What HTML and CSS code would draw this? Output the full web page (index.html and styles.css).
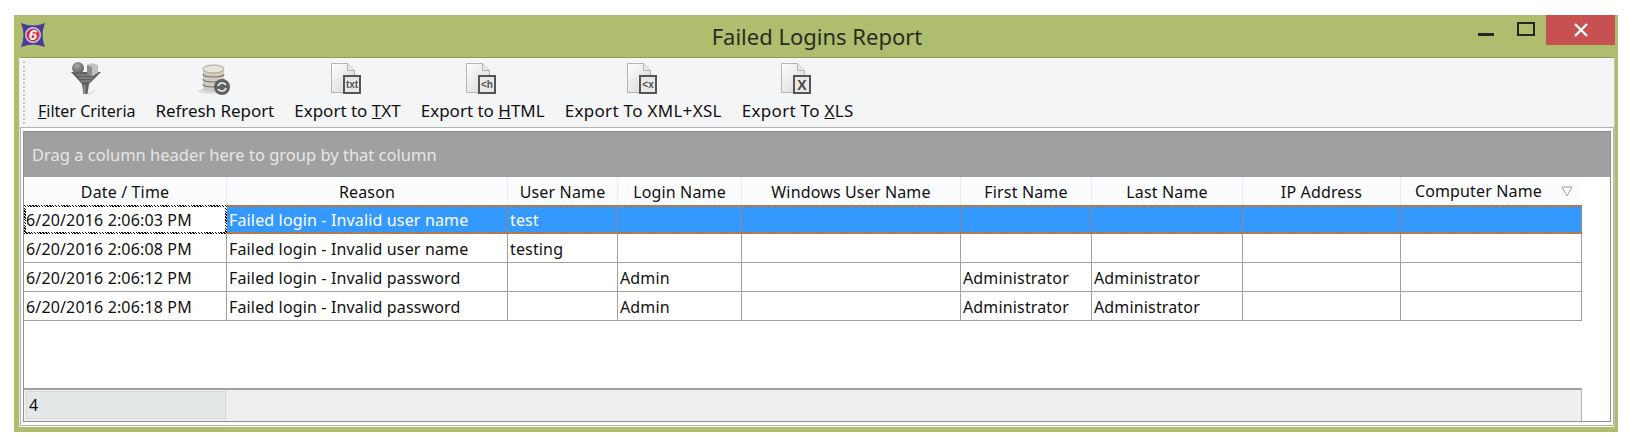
FILE: index.html
```html
<!DOCTYPE html>
<html lang="en">
<head>
    <meta charset="UTF-8">
    <meta name="viewport" content="width=device-width, initial-scale=1.0">
    <title>Failed Logins Report</title>
    <link rel="stylesheet" href="styles.css">
</head>
<body>
    <div class="window">
        <div class="titlebar">
            <svg class="app-logo" width="24" height="24" viewBox="0 0 24 24">
                <path d="M0 0 Q12 5 24 0 Q19 12 24 24 Q12 19 0 24 Q5 12 0 0Z" fill="#4b3a96"/>
                <circle cx="12" cy="12" r="8" fill="#a9d3ee"/>
                <circle cx="12" cy="12" r="6.5" fill="#e5283f"/>
                <text x="12" y="17" text-anchor="middle" class="logo-digit">6</text>
            </svg>
            <div class="title">Failed Logins Report</div>
            <div class="controls">
                <span class="btn-min"></span>
                <span class="btn-max"></span>
                <span class="btn-close">
                    <svg width="14" height="14" viewBox="0 0 14 14">
                        <path d="M1 1L13 13M13 1L1 13" stroke="#fff" stroke-width="2.4"/>
                    </svg>
                </span>
            </div>
        </div>

        <div class="content">
            <div class="toolbar">
                <div class="tool">
                    <svg class="filter-icon" width="32" height="34" viewBox="0 0 32 34">
                        <path d="M17 31L26 28L17 33Z" fill="#d5d6d8"/>
                        <path d="M0 10L30 10L18 22L16.5 32L12.5 32L11 22Z" fill="#5f5f5f"/>
                        <path d="M6 13L24 13M8 16L22 16M10 19L20 19" stroke="#9a9a9a"/>
                        <path d="M12.5 23L14.5 23L14.5 32L12.5 32Z" fill="#8f8f8f"/>
                        <circle cx="7" cy="6" r="6" fill="url(#ball)"/>
                        <path d="M16 3L21 1L27 3L27 11L21 14L16 11Z" fill="#c2c2c2"/>
                        <path d="M16 3L21 5L21 14L16 11Z" fill="#8d8d8d"/>
                    </svg>
                    <span class="tight"><u>F</u>ilter Criteria</span>
                </div>
                <div class="tool">
                    <svg class="db-icon" width="32" height="34" viewBox="0 0 32 34">
                        <ellipse cx="13" cy="29" rx="13" ry="3" fill="#dcdde0"/>
                        <path d="M5 7L5 27C5 31 26 31 26 27L26 7Z" fill="#d0ccc2"/>
                        <path d="M5 12C5 16 26 16 26 12M5 17C5 21 26 21 26 17M5 22C5 26 26 26 26 22" fill="none" stroke="#77736c" stroke-width="1.2"/>
                        <ellipse cx="15.5" cy="7" rx="10.5" ry="4" fill="#e7e4dc" stroke="#a9a59b"/>
                        <circle cx="24" cy="25" r="8" fill="#5f6062"/>
                        <path d="M20 24A4.5 4.5 0 0 1 28 23M28 26A4.5 4.5 0 0 1 20 27" fill="none" stroke="#eee" stroke-width="1.6"/>
                    </svg>
                    <span class="snug">Refresh Report</span>
                </div>
                <div class="tool">
                    <svg class="doc-icon" width="32" height="34" viewBox="0 0 32 34">
                        <use href="#doc"/>
                        <text x="22" y="26" text-anchor="middle" class="doc-label">txt</text>
                    </svg>
                    <span>Export to <u>T</u>XT</span>
                </div>
                <div class="tool">
                    <svg class="doc-icon" width="32" height="34" viewBox="0 0 32 34">
                        <use href="#doc"/>
                        <text x="22" y="26" text-anchor="middle" class="doc-label">&lt;h</text>
                    </svg>
                    <span>Export to <u>H</u>TML</span>
                </div>
                <div class="tool">
                    <svg class="doc-icon" width="32" height="34" viewBox="0 0 32 34">
                        <use href="#doc"/>
                        <text x="22" y="26" text-anchor="middle" class="doc-label">&lt;x</text>
                    </svg>
                    <span class="wide">Export To XML+XSL</span>
                </div>
                <div class="tool">
                    <svg class="doc-icon" width="32" height="34" viewBox="0 0 32 34">
                        <use href="#doc"/>
                        <text x="22" y="27.5" text-anchor="middle" class="doc-label doc-label-x">X</text>
                    </svg>
                    <span class="wide">Export To <u>X</u>LS</span>
                </div>
            </div>

            <div class="grid-frame">
                <div class="grid">
                    <div class="group-panel">Drag a column header here to group by that column</div>

                    <div class="row header">
                        <div>Date / Time</div>
                        <div>Reason</div>
                        <div>User Name</div>
                        <div>Login Name</div>
                        <div>Windows User Name</div>
                        <div>First Name</div>
                        <div>Last Name</div>
                        <div>IP Address</div>
                        <div class="sorted">
                            <span>Computer Name</span>
                            <svg class="sort-arrow" width="12" height="11" viewBox="0 0 12 11">
                                <path d="M1 1L11 1L6 10Z" fill="none" stroke="#a0a0a0"/>
                            </svg>
                        </div>
                    </div>

                    <div class="row selected">
                        <div class="focused">6/20/2016 2:06:03 PM</div>
                        <div>Failed login - Invalid user name</div>
                        <div>test</div>
                        <div></div>
                        <div></div>
                        <div></div>
                        <div></div>
                        <div></div>
                        <div></div>
                    </div>
                    <div class="row">
                        <div>6/20/2016 2:06:08 PM</div>
                        <div>Failed login - Invalid user name</div>
                        <div>testing</div>
                        <div></div>
                        <div></div>
                        <div></div>
                        <div></div>
                        <div></div>
                        <div></div>
                    </div>
                    <div class="row">
                        <div>6/20/2016 2:06:12 PM</div>
                        <div>Failed login - Invalid password</div>
                        <div></div>
                        <div>Admin</div>
                        <div></div>
                        <div>Administrator</div>
                        <div>Administrator</div>
                        <div></div>
                        <div></div>
                    </div>
                    <div class="row">
                        <div>6/20/2016 2:06:18 PM</div>
                        <div>Failed login - Invalid password</div>
                        <div></div>
                        <div>Admin</div>
                        <div></div>
                        <div>Administrator</div>
                        <div>Administrator</div>
                        <div></div>
                        <div></div>
                    </div>

                    <div class="spacer"></div>

                    <div class="summary">
                        <div class="count">4</div>
                    </div>
                </div>
            </div>
        </div>
    </div>

    <!-- shared shapes for the toolbar icons -->
    <svg class="defs" width="0" height="0">
        <defs>
            <linearGradient id="paper" x1="0" y1="0" x2="1" y2="1">
                <stop offset="0" stop-color="#ffffff"/>
                <stop offset="1" stop-color="#d4d4d4"/>
            </linearGradient>
            <radialGradient id="ball" cx="0.4" cy="0.3" r="0.8">
                <stop offset="0" stop-color="#a8a8a8"/>
                <stop offset="1" stop-color="#555"/>
            </radialGradient>
            <g id="doc">
                <path d="M1.5 1.5L17.5 1.5L24.5 8.5L24.5 30.5L1.5 30.5Z" fill="url(#paper)" stroke="#b4b4b4"/>
                <path d="M17.5 1.5L17.5 8.5L24.5 8.5" fill="#e8e8e8" stroke="#b4b4b4"/>
                <rect x="14" y="14" width="16" height="17" fill="#e8e8e8" stroke="#555" stroke-width="2"/>
            </g>
        </defs>
    </svg>
</body>
</html>
```

FILE: styles.css
```css
body {
    margin: 0;
    padding: 15px 18px 16px 14px;
    background-color: #fff;
    font-family: "Noto Sans", "Open Sans", sans-serif;
    font-size: 16px;
    letter-spacing: 0.15px;
    color: #111;
}

.window {
    height: 417px;
    box-sizing: border-box;
    display: flex;
    flex-direction: column;
    background-color: #afbd6e;
    padding: 0 3px 5px 5px;
}

.titlebar {
    height: 42px;
    flex: none;
    display: grid;
    grid-template-columns: 1fr auto 1fr;
}

.app-logo {
    margin: 8px 0 0 2px;
}

.logo-digit {
    font-family: "Liberation Sans", sans-serif;
    font-size: 15px;
    font-weight: bold;
    font-style: italic;
    fill: #fff;
}

.title {
    font-size: 22px;
    letter-spacing: 0;
    line-height: 43px;
    color: #2b2b20;
}

.controls {
    display: flex;
    justify-content: flex-end;
}

.btn-min {
    width: 16px;
    height: 3px;
    margin: 18px 23px 0 0;
    background-color: #262626;
}

.btn-max {
    width: 14px;
    height: 10px;
    margin: 7px 11px 0 0;
    border: 2px solid #262626;
}

.btn-close {
    width: 69px;
    height: 30px;
    display: flex;
    align-items: center;
    justify-content: center;
    background-color: #c75050;
}

.content {
    flex: 1;
    display: flex;
    flex-direction: column;
    background-color: #fff;
    border-top: 1px solid #8f9c5a;
    border-left: 1px solid #e8e8e8;
    border-right: 1px solid #c4c8b0;
}

.toolbar {
    height: 69px;
    flex: none;
    display: flex;
    padding-left: 8px;
    background-color: #f4f5f7;
    border-bottom: 1px solid #b4b4b4;
    position: relative;
}

.toolbar::before {
    content: "";
    position: absolute;
    left: 3px;
    top: 3px;
    bottom: 3px;
    border-left: 2px dotted #c4c4c4;
}

.tool {
    display: flex;
    flex-direction: column;
    align-items: center;
    padding: 4px 10px 0;
}

.tool svg {
    height: 34px;
    flex: none;
}

.tool .filter-icon {
    margin-left: 1px;
}

.tool .db-icon {
    margin-right: 2px;
}

.tool .doc-icon {
    margin-right: 3px;
}

.tool span {
    margin-top: 3px;
    font-size: 17px;
    letter-spacing: 0;
    line-height: 24px;
    white-space: nowrap;
}

.tool span.tight {
    font-size: 16px;
    letter-spacing: 0;
}

.tool span.snug {
    letter-spacing: -0.05px;
}

.tool span.wide {
    letter-spacing: 0.3px;
}

.defs {
    position: absolute;
}

.doc-label {
    font-family: "Liberation Sans", sans-serif;
    font-size: 10px;
    font-weight: bold;
    letter-spacing: 0;
    fill: #555;
}

.doc-label-x {
    font-size: 14px;
    fill: #444;
}

.grid-frame {
    flex: 1;
    display: flex;
    padding: 3px 2px;
    border: 1px solid #b4b4b4;
    border-top: none;
    margin-bottom: 1px;
}

.grid {
    flex: 1;
    display: flex;
    flex-direction: column;
    border: 1px solid #919191;
    border-top-color: #8a8a8a;
}

.group-panel {
    height: 45px;
    flex: none;
    padding-left: 8px;
    font-size: 16.5px;
    letter-spacing: 0;
    line-height: 46px;
    background-color: #a0a0a0;
    color: #e6e6e6;
}

.row {
    width: 1558px;
    height: 29px;
    flex: none;
    display: grid;
    grid-template-columns: 203px 281px 110px 124px 219px 131px 151px 158px 181px;
    grid-template-rows: minmax(0, 1fr);
    border-bottom: 1px solid #a0a0a0;
    box-sizing: border-box;
}

.row > div {
    padding-left: 2px;
    line-height: 31px;
    white-space: nowrap;
    border-right: 1px solid #a0a0a0;
}

.header {
    background-color: #fbfcfe;
    border-bottom: none;
}

.header > div {
    padding-left: 0;
    text-align: center;
    border-right: 1px solid #e3ecf8;
}

.header > div:last-child {
    border-right: none;
}

.header .sorted {
    display: flex;
    align-items: center;
    justify-content: flex-end;
    gap: 19px;
    padding-right: 9px;
}

.sort-arrow {
    flex: none;
}

/* dotted edge of the current row: orange dots over a grey line */
.selected {
    height: 29px;
    margin-top: -1px;
    background-color: #3399ff;
    color: #fff;
    border-top: 2px solid #8d8d8d;
    border-bottom: 2px solid #8d8d8d;
    border-image: repeating-linear-gradient(90deg, #c8702a 0 2px, #8d8d8d 2px 3px) 2;
}

.selected > div {
    line-height: 27px;
    border-right-color: #8a8a8a;
}

.selected .focused {
    margin: -2px 0;
    padding-left: 0;
    background-color: #fff;
    color: #111;
    line-height: 27px;
    border: 2px solid #000;
    border-image: repeating-linear-gradient(45deg, #000 0 1px, #fff 1px 2px) 2;
}

.spacer {
    flex: 1;
}

.summary {
    width: 1558px;
    height: 33px;
    flex: none;
    box-sizing: border-box;
    padding: 1px 0 0 2px;
    background-color: #efefef;
    border-top: 2px solid #a0a0a0;
    border-right: 1px solid #b4b4b4;
}

.count {
    width: 196px;
    height: 26px;
    padding-left: 2px;
    line-height: 27px;
    background-color: #e5e8e9;
    border: 1px solid #d5d8d8;
}
```
